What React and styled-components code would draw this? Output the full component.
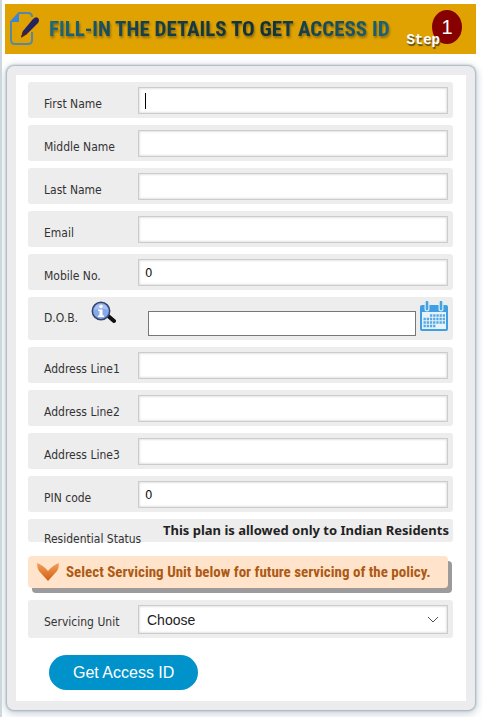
import React, { useState } from 'react';
import styled, { createGlobalStyle } from 'styled-components';

const GlobalStyle = createGlobalStyle`
  * {
    box-sizing: border-box;
  }

  body {
    margin: 0;
    background: #fff;
    color: #333;
    font-family: 'DejaVu Sans Condensed', 'DejaVu Sans', sans-serif;
    font-size: 12px;
  }
`;

const Page = styled.main`
  border-left: 2px solid #cdd8dc;
  padding: 4px 7px 7px 3px;
`;

const Banner = styled.header`
  display: flex;
  align-items: center;
  height: 50px;
  padding: 0 14px 0 4px;
  background: #dfa200;

  svg {
    flex-shrink: 0;
  }
`;

const Title = styled.h1`
  flex: 1;
  min-width: 0;
  margin: 0 0 0 8px;
  font-family: 'Roboto Condensed', Roboto, sans-serif;
  font-size: 21px;
  font-weight: bold;
  line-height: 24px;
  white-space: nowrap;
  background: linear-gradient(90deg, #1c6a80, #16404a 25%, #143038 60%, #1c6a80);
  background-clip: text;
  color: transparent;
  filter: drop-shadow(1px 2px 1px #8a6a10);
`;

const Step = styled.div`
  display: flex;
  align-items: flex-end;
  height: 38px;
`;

const StepWord = styled.span`
  position: relative;
  margin-right: -8px;
  color: #fff;
  font-family: 'Liberation Mono', monospace;
  font-size: 14px;
  font-weight: bold;
  line-height: 16px;
  text-shadow: 1px 2px 1px #5a4a28;
  z-index: 1;
`;

const StepNumber = styled.span`
  align-self: flex-start;
  width: 30px;
  height: 34px;
  border-radius: 50%;
  background: #860000;
  color: #fff;
  font-family: 'Liberation Sans', sans-serif;
  font-size: 20px;
  line-height: 34px;
  text-align: center;
`;

const Panel = styled.form`
  margin: 12px 1px 0 2px;
  padding: 7px 13px 11px 12px;
  border: 9px solid #ececee;
  border-radius: 7px;
  background: #fff;
  box-shadow: 0 0 2px 1px #a3b0b9, 0 2px 8px 2px #cbd3da;
`;

const Row = styled.div`
  display: flex;
  align-items: flex-start;
  height: ${({ $height }) => $height || 36}px;
  margin-bottom: 7px;
  padding: 5px 5px 0 16px;
  border-radius: 3px;
  background: #ededed;
`;

const Label = styled.label`
  flex: 0 0 94px;
  padding-top: 10px;
  line-height: 15px;
  white-space: nowrap;
`;

const Control = styled.div`
  position: relative;
  display: flex;
  flex: 1;
  min-width: 0;
`;

const Input = styled.input`
  width: 100%;
  height: 27px;
  padding: 0 6px;
  border: 1px solid #ccc;
  background: #fff;
  box-shadow: inset 0 0 2px 1px #e4e4e4;
  color: #111;
  font-family: inherit;
  font-size: 13px;
`;

const Caret = styled.span`
  position: absolute;
  top: 6px;
  left: 7px;
  width: 1px;
  height: 16px;
  background: #000;
`;

const DobRow = styled(Row)`
  padding-top: 4px;
`;

const DobLabel = styled(Label)`
  flex: 0 0 47px;
`;

const DateInput = styled(Input)`
  flex: 1;
  min-width: 0;
  height: 25px;
  margin: 10px 4px 0 32px;
  border-color: #777;
  box-shadow: none;
`;

const IconButton = styled.button`
  display: flex;
  padding: 0;
  border: none;
  background: none;
  cursor: pointer;
`;

const Note = styled.strong`
  flex: 1;
  color: #222;
  font-family: 'Noto Sans', sans-serif;
  font-size: 13px;
  line-height: 16px;
  text-align: right;
  white-space: nowrap;
`;

const StatusRow = styled(Row)`
  margin-bottom: 14px;
  padding: 3px 4px 0 16px;
`;

const StatusLabel = styled.span`
  flex: 0 0 94px;
  padding-top: 10px;
  line-height: 15px;
  white-space: nowrap;
`;

const Notice = styled.p`
  display: flex;
  align-items: center;
  height: 32px;
  margin: 0 5px 12px 0;
  padding-left: 9px;
  border-radius: 4px;
  background: #ffe4cb;
  box-shadow: 4px 5px 0 #9c9a9a;
  color: #ac5a16;
  font-family: 'Roboto Condensed', Roboto, sans-serif;
  font-size: 15px;
  font-weight: bold;
  white-space: nowrap;

  svg {
    flex-shrink: 0;
    margin-right: 7px;
  }
`;

const Select = styled.select`
  width: 100%;
  height: 29px;
  padding: 0 8px;
  border: 1px solid #ccc;
  border-radius: 0;
  background: #fff;
  box-shadow: inset 0 0 2px 1px #e4e4e4;
  color: #222;
  appearance: none;
  font-family: 'Liberation Sans', sans-serif;
  font-size: 14px;
`;

const SelectArrow = styled.svg`
  position: absolute;
  top: 11px;
  right: 9px;
  pointer-events: none;
`;

const SubmitButton = styled.button`
  display: block;
  height: 35px;
  margin: 17px 0 0 21px;
  padding: 0 24px;
  border: none;
  border-radius: 18px;
  background: #0093cb;
  color: #fff;
  font-family: 'Liberation Sans', sans-serif;
  font-size: 16px;
  cursor: pointer;
`;

const EditIcon = () => (
  <svg width="32" height="34" viewBox="0 0 32 34" fill="none" aria-hidden="true">
    <path
      d="M23 5q0-4-4-4h-9L2 10v18q0 4 4 4h13q4 0 4-4v-8"
      stroke="#5489a5"
      strokeWidth="2"
    />
    <path d="M10 1v9H1z" fill="#3586dc" />
    <path d="M24 7q3-3 5-1t0 5L18 22l-6 3 2-6z" fill="#26235f" />
    <path d="M14 19l4 3-6 4z" fill="#4b2028" />
  </svg>
);

const InfoIcon = () => (
  <svg width="25" height="23" viewBox="0 0 25 23" aria-hidden="true">
    <path d="M16 14l7 6" stroke="#111" strokeWidth="4" strokeLinecap="round" />
    <circle cx="10" cy="10" r="8.7" fill="#88a8e8" stroke="#34466e" strokeWidth="1.5" />
    <path d="M3 9q1-6 7-6t7 6q-7-3-14 0z" fill="#a8c0f4" />
    <circle cx="10" cy="5.5" r="1.7" fill="#fff" />
    <path d="M7 8.5h4.5v6H13V16H7v-1.500h1.500V10H7z" fill="#fff" />
  </svg>
);

const CalendarIcon = () => (
  <svg width="28" height="30" viewBox="0 0 28 30" aria-hidden="true">
    <rect x="1" y="5" width="26" height="24" rx="1" fill="#e6f3fc" stroke="#3f9fe2" strokeWidth="2" />
    <path d="M1 5h26v6H1z" fill="#3f9fe2" />
    <path d="M7 2v6M21 2v6" stroke="#d6ebf8" strokeWidth="5" strokeLinecap="round" />
    <path d="M7 1v7M21 1v7" stroke="#48a2dc" strokeWidth="2.500" strokeLinecap="round" />
    <path
      d="M10 14.500h15M3.500 18h21.500M3.500 21.500h21.500M3.500 25h12"
      stroke="#58a9df"
      strokeWidth="2.500"
      strokeDasharray="2.300 .9"
    />
  </svg>
);

const ChevronIcon = () => (
  <svg width="22" height="18" viewBox="0 0 22 18" aria-hidden="true">
    <defs>
      <linearGradient id="chevron" x1="0" y1="0" x2="0" y2="1">
        <stop offset="0" stopColor="#f4a05c" />
        <stop offset="1" stopColor="#cf5d10" />
      </linearGradient>
    </defs>
    <path d="M0 0q6 2 11 8q5-6 11-8q0 5-2 8l-9 10L2 8Q0 5 0 0z" fill="url(#chevron)" />
  </svg>
);

const Field = ({ id, label, value, onChange, caret }) => (
  <Row>
    <Label htmlFor={id}>{label}</Label>
    <Control>
      <Input type="text" id={id} value={value} onChange={onChange} />
      {caret && <Caret />}
    </Control>
  </Row>
);

const personalFields = [
  ['firstName', 'First Name'],
  ['middleName', 'Middle Name'],
  ['lastName', 'Last Name'],
  ['email', 'Email'],
  ['mobile', 'Mobile No.'],
];

const addressFields = [
  ['address1', 'Address Line1'],
  ['address2', 'Address Line2'],
  ['address3', 'Address Line3'],
  ['pin', 'PIN code'],
];

const App = () => {
  const [values, setValues] = useState({ mobile: '0', pin: '0' });

  const handleChange = (e) => {
    setValues({ ...values, [e.target.id]: e.target.value });
  };

  const renderField = ([id, label]) => (
    <Field
      key={id}
      id={id}
      label={label}
      value={values[id] || ''}
      onChange={handleChange}
      caret={id === 'firstName' && !values.firstName}
    />
  );

  return (
    <>
      <GlobalStyle />
      <Page>
        <Banner>
          <EditIcon />
          <Title>FILL-IN THE DETAILS TO GET ACCESS ID</Title>
          <Step>
            <StepWord>Step</StepWord>
            <StepNumber>1</StepNumber>
          </Step>
        </Banner>
        <Panel onSubmit={(e) => e.preventDefault()}>
          {personalFields.map(renderField)}
          <DobRow $height={43}>
            <DobLabel htmlFor="dob">D.O.B.</DobLabel>
            <IconButton type="button" aria-label="Date of birth help">
              <InfoIcon />
            </IconButton>
            <DateInput type="text" id="dob" value={values.dob || ''} onChange={handleChange} />
            <IconButton type="button" aria-label="Pick a date">
              <CalendarIcon />
            </IconButton>
          </DobRow>
          {addressFields.map(renderField)}
          <StatusRow $height={23}>
            <StatusLabel>Residential Status</StatusLabel>
            <Note>This plan is allowed only to Indian Residents</Note>
          </StatusRow>
          <Notice>
            <ChevronIcon />
            Select Servicing Unit below for future servicing of the policy.
          </Notice>
          <Row $height={38}>
            <Label htmlFor="unit">Servicing Unit</Label>
            <Control>
              <Select id="unit">
                <option>Choose</option>
              </Select>
              <SelectArrow width="12" height="8" viewBox="0 0 12 8" fill="none">
                <path d="M1 1l5 5 5-5" stroke="#555" />
              </SelectArrow>
            </Control>
          </Row>
          <SubmitButton type="submit">Get Access ID</SubmitButton>
        </Panel>
      </Page>
    </>
  );
};

export default App;
